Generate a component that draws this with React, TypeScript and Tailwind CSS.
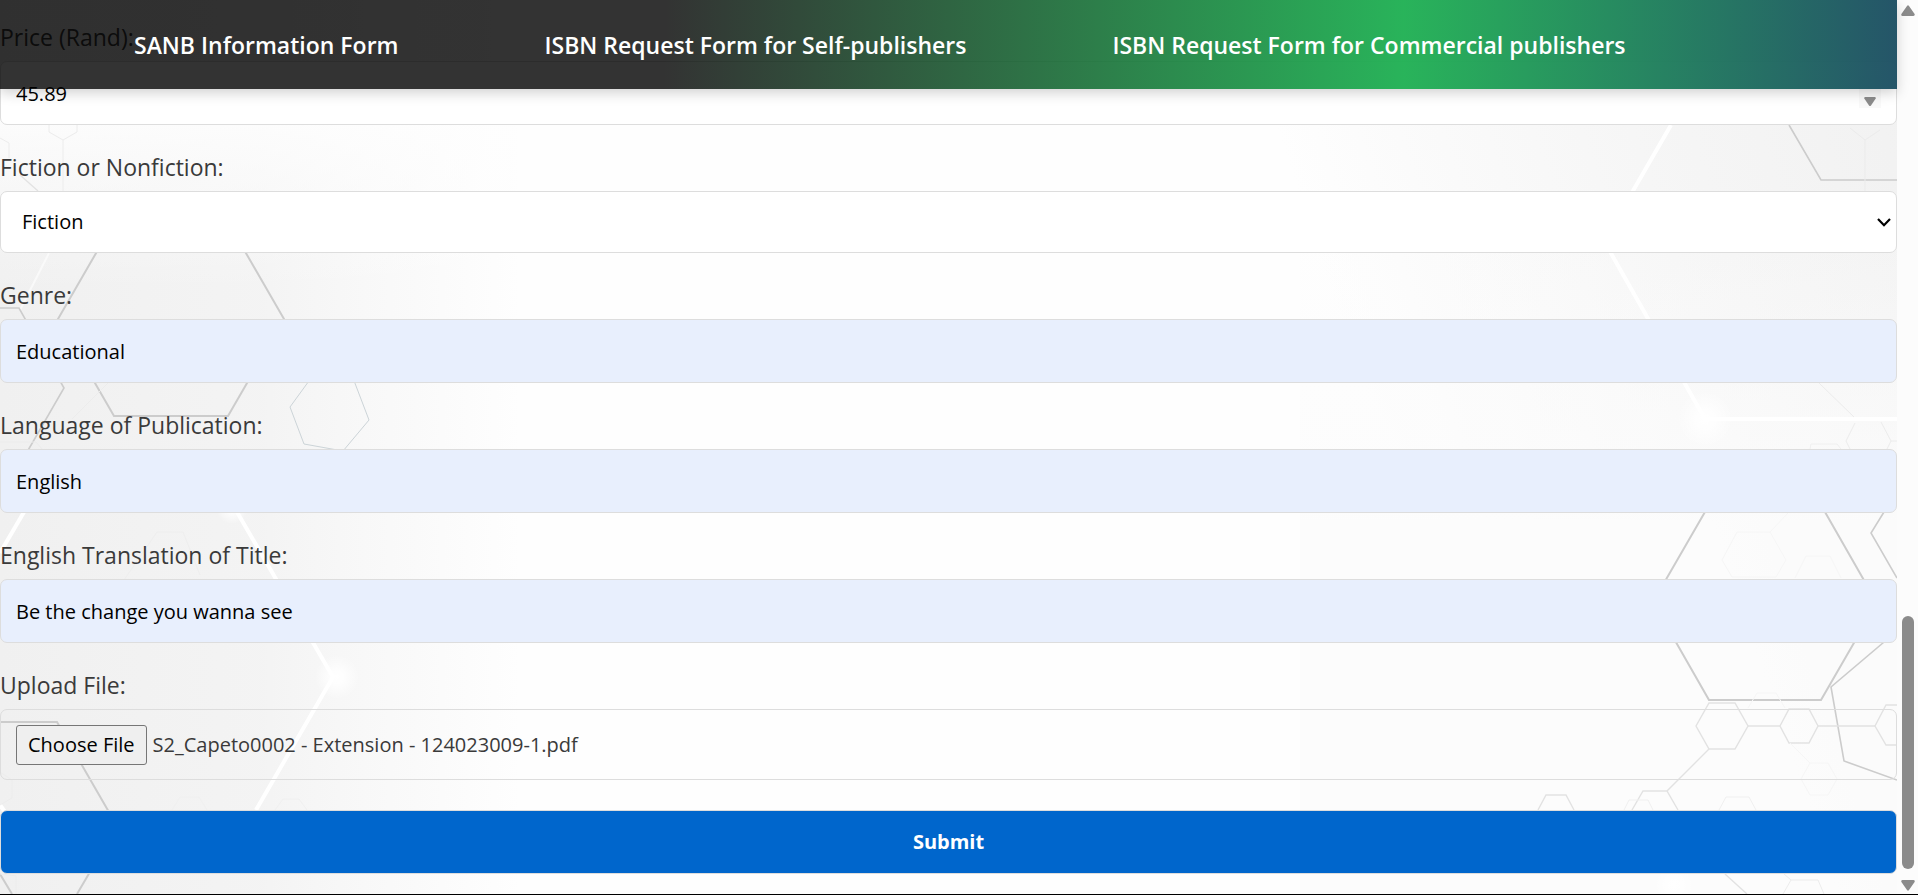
import { useEffect, useRef } from "react";
import type { ReactNode } from "react";

const FONT = "font-['Open_Sans','Noto_Sans',sans-serif]";
const BOX = "block w-full rounded-[7px] border border-[#dddddd] text-[20px] leading-7";
const TEXT_BOX = `${BOX} h-16 px-[15px] text-black outline-none`;

const links = [
  "SANB Information Form",
  "ISBN Request Form for Self-publishers",
  "ISBN Request Form for Commercial publishers",
];

function Field({ id, label, children }: { id: string; label: string; children: ReactNode }) {
  return (
    <div className="flex flex-col gap-2">
      <label htmlFor={id} className="self-start text-[23px] leading-8 text-[#3a3a3a]">
        {label}
      </label>
      {children}
    </div>
  );
}

function UploadInput({ id, filename }: { id: string; filename: string }) {
  const ref = useRef<HTMLInputElement>(null);
  useEffect(() => {
    if (!ref.current) return;
    const transfer = new DataTransfer();
    transfer.items.add(new File([""], filename, { type: "application/pdf" }));
    ref.current.files = transfer.files;
  }, [filename]);
  return (
    <input
      ref={ref}
      id={id}
      type="file"
      className={`${BOX} h-[71px] px-[15px] py-[15px] text-[#3a3a3a] file:mr-1.5 file:h-10 file:rounded-[3px] file:border file:border-solid file:border-[#767676] file:bg-[#efefef] file:px-[11px] file:text-black`}
    />
  );
}

function Backdrop() {
  return (
    <svg
      aria-hidden="true"
      className="absolute inset-0 h-full w-full"
      viewBox="0 0 1897 894"
      preserveAspectRatio="none"
      fill="none"
    >
      <defs>
        <linearGradient id="left" x1="0" y1="0" x2="1" y2="0">
          <stop offset="0" stopColor="#f0f0f0" />
          <stop offset="0.5" stopColor="#f3f3f3" stopOpacity="0.95" />
          <stop offset="0.75" stopColor="#f4f4f4" stopOpacity="0.5" />
          <stop offset="1" stopColor="#f4f4f4" stopOpacity="0" />
        </linearGradient>
        <linearGradient id="right" gradientUnits="userSpaceOnUse" x1="1300" y1="200" x2="1897" y2="0">
          <stop offset="0" stopColor="#f1f1f1" stopOpacity="0" />
          <stop offset="0.6" stopColor="#f3f3f3" stopOpacity="0.8" />
          <stop offset="1" stopColor="#f1f1f1" />
        </linearGradient>
        <linearGradient id="topFade" x1="0" y1="0" x2="0" y2="1">
          <stop offset="0" stopColor="#fefefe" />
          <stop offset="1" stopColor="#fefefe" stopOpacity="0" />
        </linearGradient>
        <linearGradient id="rightFade" x1="0" y1="0" x2="0" y2="1">
          <stop offset="0" stopColor="#fcfcfc" stopOpacity="0" />
          <stop offset="1" stopColor="#fcfcfc" stopOpacity="0.9" />
        </linearGradient>
        <radialGradient id="glow">
          <stop offset="0" stopColor="#ffffff" />
          <stop offset="0.3" stopColor="#ffffff" stopOpacity="0.85" />
          <stop offset="1" stopColor="#ffffff" stopOpacity="0" />
        </radialGradient>
      </defs>
      <rect width="1897" height="894" fill="#fefefe" />
      <rect width="520" height="894" fill="url(#left)" />
      <rect y="90" width="520" height="200" fill="url(#topFade)" />
      <rect x="1160" width="737" height="894" fill="url(#right)" />
      <rect x="1300" y="200" width="597" height="320" fill="url(#rightFade)" />
      <rect x="1300" y="520" width="597" height="374" fill="#fcfcfc" opacity="0.9" />

      <g stroke="#ffffff" strokeWidth="4">
        <path d="M49 253 20 310" strokeWidth="2" strokeOpacity="0.6" />
        <path d="M24 512 0 553" />
        <path d="M237 512 333 677 256 810" />
        <path d="M1671 125 1604 241 1705 419 1897 419" />
        <path d="M0 805 8 816" />
      </g>
      <circle cx="337" cy="677" r="22" fill="url(#glow)" />
      <circle cx="1705" cy="419" r="28" fill="url(#glow)" />
      <circle cx="1674" cy="885" r="20" fill="url(#glow)" />
      <circle cx="232" cy="508" r="16" fill="url(#glow)" />

      <g stroke="#cccccc" strokeWidth="2">
        <path d="M58 319 114 222 228 222 284 319 228 416 114 416Z" />
        <path d="M0 308 19 308 64 388 19 466" strokeWidth="1.6" />
        <path d="M0 722 57 722 117 826 77 894M0 874 12 894" />
        <path d="M1789 125 1821 180 1897 180" strokeWidth="1.6" />
        <path d="M1653 602 1709 505 1821 505 1877 603 1821 700 1709 700Z" />
        <path d="M1884 512 1871 533 1897 578" strokeWidth="1.6" />
        <path d="M1897 631 1831 687 1844 761 1897 780" strokeWidth="1.6" />
      </g>
      <path d="M290 407 322 363 348 365 369 420 343 451 304 444Z" stroke="#ccd4d8" strokeWidth="1" />
      <g stroke="#e2e2e2" strokeWidth="1.4">
        <path d="M20 175 38 191" />
        <path d="M1696 726 1709 703 1735 703 1748 726 1735 749 1709 749Z" />
        <path d="M1748 726 1780 726M1818 726 1875 726M1709 749 1667 791" />
        <path d="M1780 726 1789 709 1809 709 1818 726 1809 743 1789 743Z" />
        <path d="M1897 705 1886 705 1875 726 1886 745 1897 745" />
        <path d="M1632 810 1643 791 1667 791 1678 810" />
        <path d="M1538 810 1546 795 1566 795 1574 810" />
        <path d="M1725 874 1747 894" />
      </g>
      <g stroke="#ececec" strokeWidth="1">
        <path d="M49 125 49 132 63 140 77 132 77 125M63 140 63 191M0 138 9 143 9 158" />
        <path d="M108 383 72 419M0 442 36 442 42 449" />
        <path d="M0 772 12 780 12 798 0 805M0 874 16 876 16 894" />
        <path d="M1819 383 1854 417M1855 423 1846 441 1850 449M1881 422 1891 441 1887 449M1891 441 1897 441" />
        <path d="M1784 874 1791 880 1818 880 1824 894M1791 880 1783 894" />
      </g>
      <g stroke="#f0f0f0" strokeWidth="1">
        <path d="M1810 449 1811 444 1837 444 1841 449" />
        <path d="M1850 128 1865 140 1880 130M1865 140 1865 191" stroke="#ebebeb" />
        <path d="M1624 810 1629 800 1648 800 1653 810M1719 810 1726 797 1749 797 1756 810" />
        <path d="M172 810 180 797 199 797 207 810M275 810 283 799 299 799 307 810" />
        <path d="M124 580 157 532 183 532 200 575" stroke="#eeeeee" />
      </g>
      <g stroke="#f6f6f6" strokeWidth="1">
        <path d="M1722 560 1737 532 1770 532 1786 560 1776 577 1732 577ZM1770 532 1789 512" />
        <path d="M1795 578 1806 556 1830 556 1841 578" />
        <path d="M1801 779 1810 763 1828 763 1837 779 1828 795 1810 795ZM1790 743 1810 763" />
        <path d="M1748 708 1757 693 1776 693 1785 708" />
      </g>
    </svg>
  );
}

function Scrollbar() {
  return (
    <div aria-hidden="true" className="flex w-[21px] shrink-0 flex-col items-center gap-[11px] bg-[#fcfcfc] pt-[5px] pb-[3px]">
      <svg width="14" height="11" viewBox="0 0 14 11" fill="#8b8b8b">
        <path d="M6 1Q7 -.6 8 1L13.6 9Q14.2 11 12.4 11H1.6Q-.2 11 .4 9Z" />
      </svg>
      <div className="flex w-3 flex-1 flex-col justify-end">
        <div className="h-[253px] rounded-full bg-[#8b8b8b]" />
      </div>
      <svg width="14" height="11" viewBox="0 0 14 11" fill="#8b8b8b">
        <path d="M6 10Q7 11.6 8 10L13.6 2Q14.2 0 12.4 0H1.6Q-.2 0 .4 2Z" />
      </svg>
    </div>
  );
}

export default function App() {
  return (
    <div className={`flex min-h-screen border-b border-black ${FONT}`}>
      <div className="relative min-w-0 flex-1">
        <Backdrop />
        <header className="absolute inset-x-0 top-0 z-10 bg-[linear-gradient(90deg,rgba(0,0,0,0.8)_0%,rgba(0,0,0,0.8)_35%,rgba(34,177,85,0.97)_74%,rgba(30,80,100,0.97)_100%)] shadow-[0_4px_12px_rgba(0,0,0,0.18)]">
          <nav className="flex h-[89px] items-center gap-[146px] pl-[134px]">
            {links.map((text) => (
              <a key={text} href="#" className="text-[23px] leading-8 font-semibold whitespace-nowrap text-white">
                {text}
              </a>
            ))}
          </nav>
        </header>

        <form className="relative flex flex-col gap-[26px] pt-[21px] pb-5" onSubmit={(e) => e.preventDefault()}>
          <Field id="price" label="Price (Rand):">
            <div className="relative">
              <input
                id="price"
                type="number"
                step="0.01"
                defaultValue="45.89"
                className={`${TEXT_BOX} bg-white [appearance:textfield]`}
              />
              <span aria-hidden="true" className="absolute right-4 bottom-[17px] flex h-8 w-[22px] items-end justify-center bg-[#f9f9f9] pb-0.5">
                <svg width="12" height="9" viewBox="0 0 12 9" fill="#8b8b8b">
                  <path d="M5 8.4Q6 9.6 7 8.4L11.7 1.6Q12 0 10.8 0H1.2Q0 0 .3 1.6Z" />
                </svg>
              </span>
            </div>
          </Field>

          <Field id="kind" label="Fiction or Nonfiction:">
            <div className="relative">
              <select id="kind" defaultValue="Fiction" className={`${BOX} h-[62px] appearance-none bg-white px-[21px] text-black outline-none`}>
                <option>Fiction</option>
                <option>Nonfiction</option>
              </select>
              <svg aria-hidden="true" className="pointer-events-none absolute top-[27px] right-[6px]" width="14" height="9" viewBox="0 0 14 9" fill="none" stroke="#000000" strokeWidth="2.2">
                <path d="M1 1 7 7.2 13 1" />
              </svg>
            </div>
          </Field>

          <Field id="genre" label="Genre:">
            <input id="genre" type="text" defaultValue="Educational" className={`${TEXT_BOX} bg-[#e8effd]`} />
          </Field>

          <Field id="language" label="Language of Publication:">
            <input id="language" type="text" defaultValue="English" className={`${TEXT_BOX} bg-[#e8effd]`} />
          </Field>

          <Field id="translation" label="English Translation of Title:">
            <input id="translation" type="text" defaultValue="Be the change you wanna see" className={`${TEXT_BOX} bg-[#e8effd]`} />
          </Field>

          <Field id="upload" label="Upload File:">
            <UploadInput id="upload" filename="S2_Capeto0002 - Extension - 124023009-1.pdf" />
          </Field>

          <button type="submit" className={`${BOX} mt-1 h-16 bg-[#0066cc] font-bold text-white`}>
            Submit
          </button>
        </form>
      </div>
      <Scrollbar />
    </div>
  );
}
